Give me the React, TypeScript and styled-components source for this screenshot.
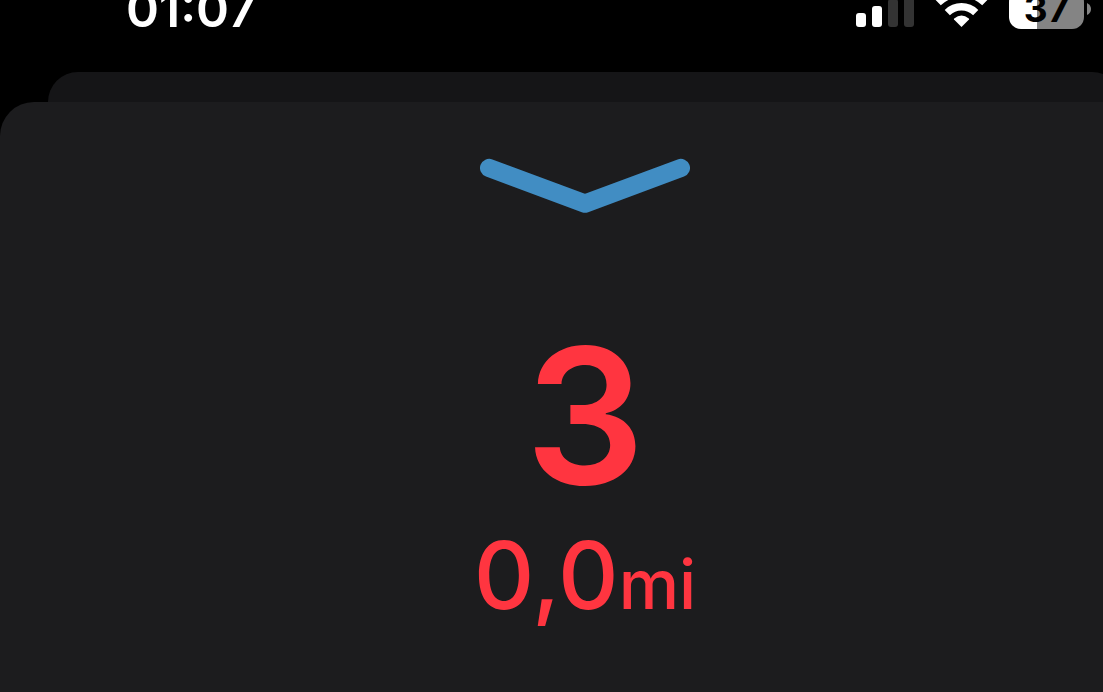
import React from "react";
import styled, { createGlobalStyle } from "styled-components";

const GlobalStyle = createGlobalStyle`
  * { box-sizing: border-box; }
  html, body { margin: 0; background: #000; }
  body { font-family: Inter, "Liberation Sans", sans-serif; }
`;

const Viewport = styled.div`
  display: flow-root;
  min-height: 100vh;
  overflow: hidden;
  background: #000;
`;

/* The screen runs on past the right edge of the viewport. */
const Screen = styled.div`
  display: flex;
  flex-direction: column;
  width: calc(100% + 67px);
  min-height: calc(100vh + 13px);
  margin-top: -13px;
`;

const StatusBar = styled.header`
  display: flex;
  align-items: center;
  justify-content: space-between;
  height: 44px;
  margin-bottom: 41px;
  padding: 0 79px 0 126px;
  color: #fff;
`;

const Time = styled.time`
  font-size: 50px;
  line-height: 44px;
  font-weight: 600;
`;

const Indicators = styled.div`
  display: flex;
  align-items: center;
  gap: 21px;
`;

const Battery = styled.div`
  display: flex;
  align-items: center;
  gap: 3px;
`;

const BatteryBody = styled.div<{ $level: number }>`
  width: 75px;
  height: 39px;
  border-radius: 12px;
  background: linear-gradient(
    to right,
    #fff ${(p) => p.$level}%,
    #848484 ${(p) => p.$level}%
  );
  color: #000;
  font-size: 37px;
  line-height: 38px;
  font-weight: 700;
  text-align: center;
`;

const BackSheet = styled.div`
  height: 30px;
  margin: 0 48px;
  border-radius: 32px 32px 0 0;
  background: #151517;
`;

const Sheet = styled.main`
  display: flex;
  flex: 1;
  flex-direction: column;
  align-items: center;
  padding-top: 56px;
  border-radius: 34px 34px 0 0;
  background: #1c1c1e;
  color: #ff3540;
`;

const CloseButton = styled.button`
  display: block;
  padding: 0;
  border: 0;
  background: none;
  cursor: pointer;

  svg { display: block; }
`;

const Count = styled.p`
  margin: 96px 0 0;
  font-size: 188px;
  line-height: 212px;
  font-weight: 600;
`;

const Distance = styled.p`
  margin: 0;
  font-size: 94px;
  line-height: 106px;
  font-weight: 500;
  white-space: nowrap;
`;

const Unit = styled.span`
  font-size: 68px;
`;

const Signal = () => (
  <svg width="58" height="35" viewBox="0 0 58 35" aria-label="Signal" role="img">
    <rect x="0" y="21" width="10" height="14" rx="3" fill="#fff" />
    <rect x="16" y="14" width="10" height="21" rx="3" fill="#fff" />
    <rect x="32" y="7" width="10" height="28" rx="3" fill="#333" />
    <rect x="48" y="0" width="10" height="35" rx="3" fill="#333" />
  </svg>
);

const Wifi = () => (
  <svg width="53" height="39" viewBox="0 0 53 39" aria-label="Wi-Fi" role="img">
    <path d="M26.5 37 L19 29.5 Q18.6 29 19.2 28.4 Q26.5 22.8 33.8 28.4 Q34.4 29 34 29.5 Z" fill="#fff" />
    <g fill="none" stroke="#fff" strokeWidth="7.4">
      <path d="M12.3 22.6 A20.3 20.3 0 0 1 40.7 22.6" />
      <path d="M3.2 12.7 A33.6 33.6 0 0 1 49.8 12.7" />
    </g>
  </svg>
);

export default function App() {
  return (
    <>
      <GlobalStyle />
      <Viewport>
        <Screen>
          <StatusBar>
            <Time>01:07</Time>
            <Indicators>
              <Signal />
              <Wifi />
              <Battery>
                <BatteryBody $level={37}>37</BatteryBody>
                <svg width="4" height="12" viewBox="0 0 4 12" aria-hidden="true">
                  <path d="M0 0 Q4 2 4 6 Q4 10 0 12 Z" fill="#848484" />
                </svg>
              </Battery>
            </Indicators>
          </StatusBar>
          <BackSheet />
          <Sheet>
            <CloseButton type="button" aria-label="Close">
              <svg width="210" height="56" viewBox="0 0 210 56">
                <path
                  d="M9.2 10 L105 45.6 L200.8 10"
                  fill="none"
                  stroke="#418dc3"
                  strokeWidth="18.4"
                  strokeLinecap="round"
                  strokeLinejoin="round"
                />
              </svg>
            </CloseButton>
            <Count>3</Count>
            <Distance>
              0,0<Unit>mi</Unit>
            </Distance>
          </Sheet>
        </Screen>
      </Viewport>
    </>
  );
}
